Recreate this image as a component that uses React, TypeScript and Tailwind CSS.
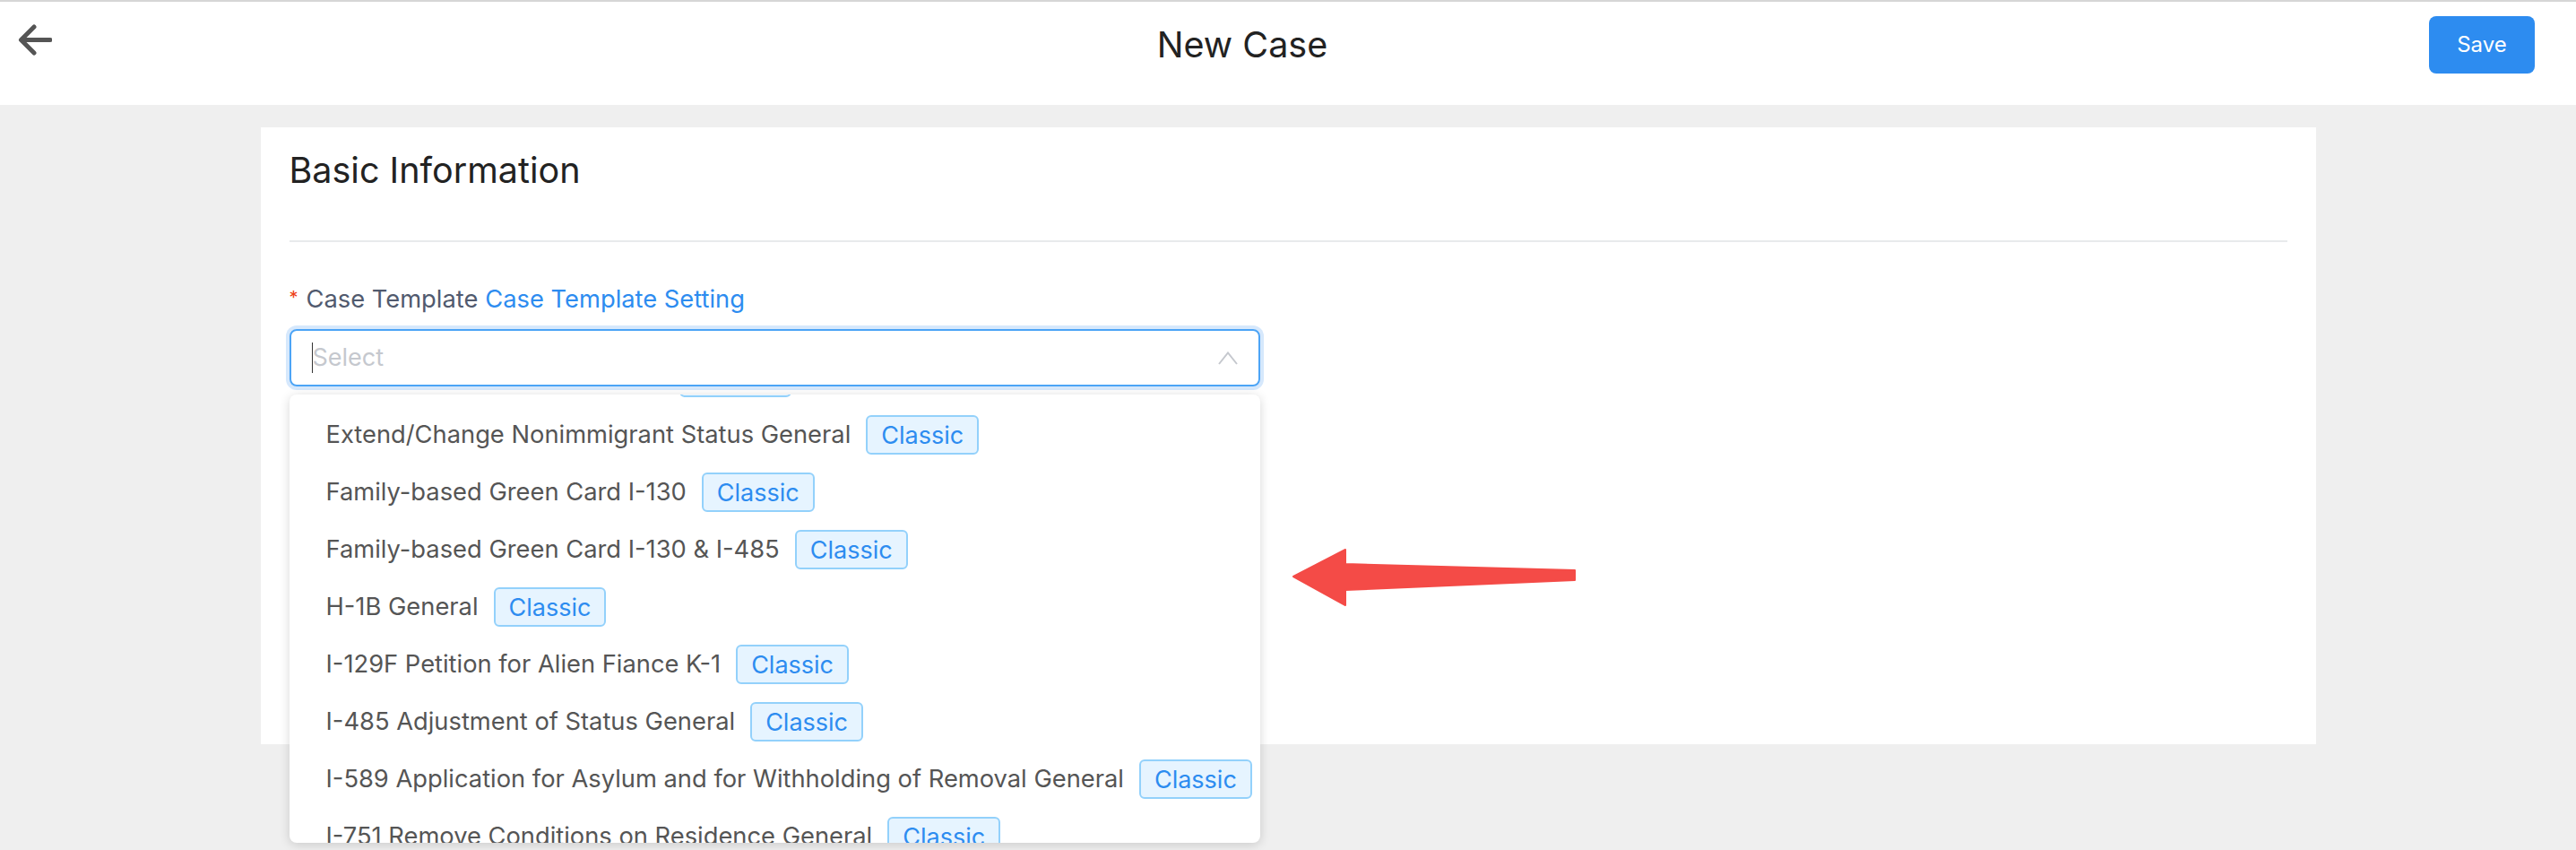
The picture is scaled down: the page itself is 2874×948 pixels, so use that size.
const templates = [
  'EB-2 National Interest Waiver',
  'Extend/Change Nonimmigrant Status General',
  'Family-based Green Card I-130',
  'Family-based Green Card I-130 & I-485',
  'H-1B General',
  'I-129F Petition for Alien Fiance K-1',
  'I-485 Adjustment of Status General',
  'I-589 Application for Asylum and for Withholding of Removal General',
  'I-751 Remove Conditions on Residence General',
  'K-1 Fiance Visa General',
]

function BackArrow() {
  return (
    <svg width="38" height="35" viewBox="0 0 38 35" fill="none">
      <path
        d="M36 17.5H4M18 3L3.5 17.5L18 32"
        stroke="#555555"
        strokeWidth="5"
        strokeLinecap="round"
        strokeLinejoin="round"
      />
    </svg>
  )
}

function CaretUp() {
  return (
    <svg width="22" height="15" viewBox="0 0 22 15" fill="none">
      <path d="M1 14L11 1.5L21 14" stroke="#c5c8ce" strokeWidth="2" />
    </svg>
  )
}

function TemplateTag() {
  return (
    <span className="flex items-center h-[44px] px-[15px] border-2 border-[#93d1fb] bg-[#e6f4ff] rounded-[6px] text-[#2d8cf0] text-[27px] leading-none">
      Classic
    </span>
  )
}

export default function App() {
  return (
    <div className="relative h-[948px] bg-[#efefef] font-['Inter',sans-serif] overflow-hidden">
      {/* top bar */}
      <header className="h-[117px] bg-white border-t-2 border-[#d6d6d6] flex items-start">
        <button className="w-[62px] pl-[20px] pt-[25px] flex">
          <BackArrow />
        </button>
        <h1 className="flex-1 text-center text-[39.5px] leading-[64px] mt-[16px] text-[#222222]">New Case</h1>
        <div className="pr-[46px] pt-[16px]">
          <button className="w-[118px] h-[64px] rounded-[8px] bg-[#2d8cf0] text-white text-[24px]">Save</button>
        </div>
      </header>

      <main className="pt-[25px]">
        <section className="w-[2293px] h-[688px] mx-auto bg-white px-[32px] pt-[18px]">
          <h2 className="text-[39.5px] leading-[60px] text-[#222222]">Basic Information</h2>
          <div className="mt-[48px] h-[2px] bg-[#e8eaec]" />

          <div className="mt-[44px] text-[27.3px] leading-[40px] text-[#515a6e] flex items-center">
            <span className="text-[#ed4014] text-[20px] mr-[9px] -mt-[4px]">*</span>
            <span>Case Template</span>
            <a className="ml-[8px] text-[#2d8cf0]">Case Template Setting</a>
          </div>

          {/* template select, opened */}
          <div className="relative mt-[13px] w-[1083px]">
            <div className="h-[64px] border-2 border-[#4ca4f6] rounded-[8px] ring-4 ring-[#d6e8fc] flex items-center pl-[23px] pr-[23px]">
              <span className="w-px h-[34px] bg-[#333333]" />
              <span className="flex-1 text-[27px] text-[#c5c8ce]">Select</span>
              <CaretUp />
            </div>

            <div className="absolute left-0 top-[73px] w-full h-[500px] bg-white rounded-[8px] shadow-[0_2px_12px_rgba(0,0,0,0.16)] overflow-hidden z-10">
              <ul className="-mt-[51px]">
                {templates.map((name) => (
                  <li key={name} className="h-[64px] flex items-center gap-[17px] pl-[41px] text-[27.3px] text-[#555555]">
                    <span>{name}</span>
                    <TemplateTag />
                  </li>
                ))}
              </ul>
            </div>
          </div>
        </section>
      </main>

      {/* red pointer arrow */}
      <svg
        className="absolute left-[1436px] top-[608px]"
        width="325"
        height="72"
        viewBox="0 0 325 72"
      >
        <path
          d="M7 35L65 5V21L321 28V39L65 50V67Z"
          fill="#f44b47"
          stroke="#f44b47"
          strokeWidth="2"
          strokeLinejoin="round"
        />
      </svg>
    </div>
  )
}
